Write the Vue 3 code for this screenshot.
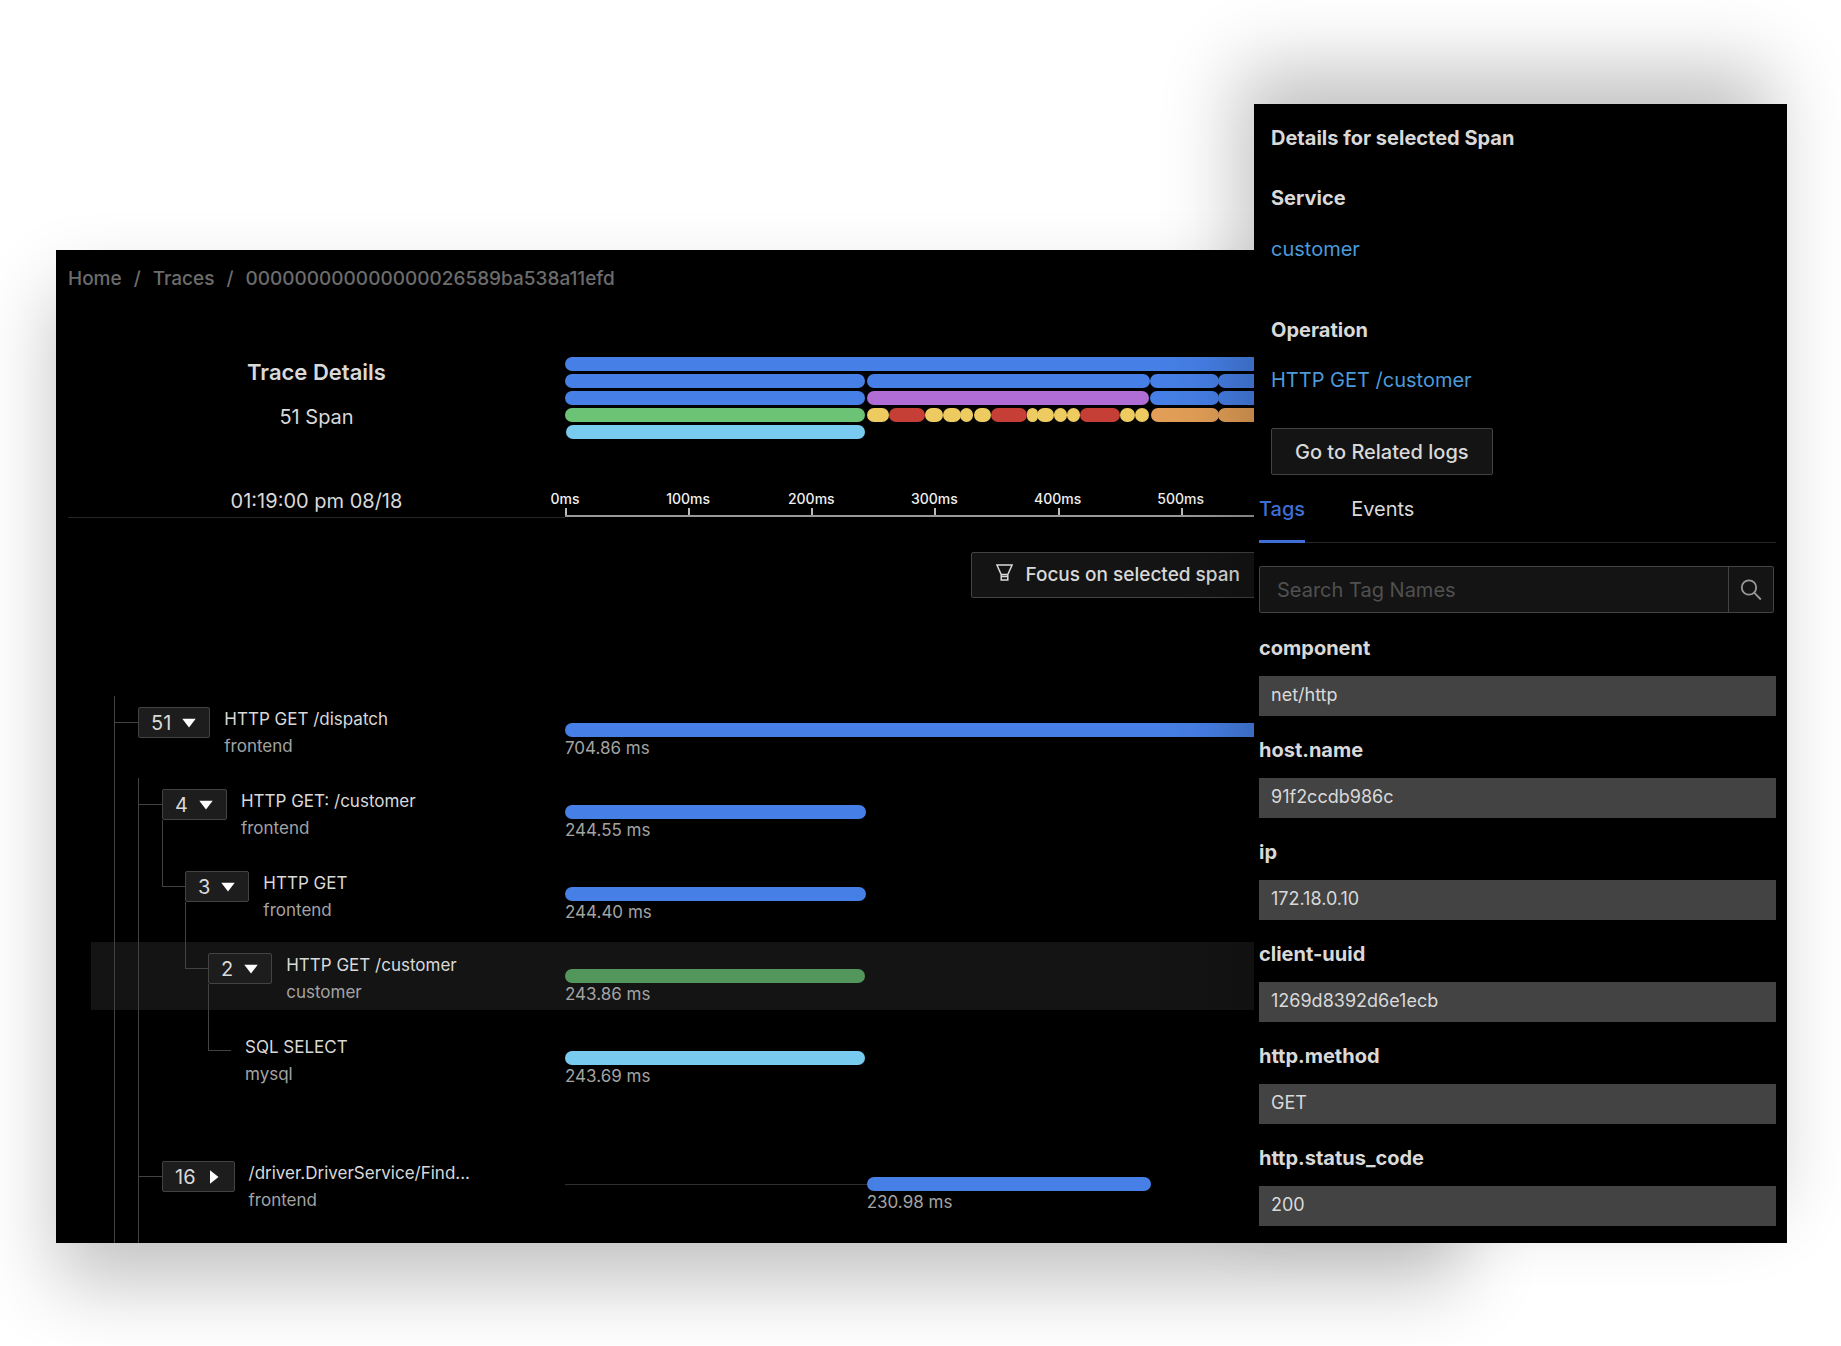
<script setup>
import { ref, computed } from 'vue'

const TRACE_MS = 704.86
const pct = (ms) => `${(ms / TRACE_MS) * 100}%`

const lanes = [
  [[0, 704.86, 'blue']],
  [[0, 244, 'blue'], [245, 475, 'blue'], [475, 531, 'blue'], [530, 704.86, 'blue']],
  [[0, 244, 'blue'], [245, 474, 'purple'], [475, 531, 'blue'], [530, 704.86, 'blue']],
  [
    [0, 244, 'green'], [245, 263, 'yellow'], [263, 292, 'red'], [292, 307, 'yellow'],
    [307, 322, 'yellow'], [321, 331, 'yellow'], [332, 346, 'yellow'], [346, 375, 'red'],
    [375, 384, 'yellow'], [383, 397, 'yellow'], [397, 408, 'yellow'], [408, 418, 'yellow'],
    [418, 451, 'red'], [451, 463, 'yellow'], [463, 474, 'yellow'],
    [476, 531, 'orange'], [530, 704.86, 'orange'],
  ],
  [[1, 244, 'cyan']],
].map((lane) => {
  let end = 0
  return lane.map(([from, to, color]) => {
    const style = { marginLeft: pct(from - end), width: pct(to - from) }
    end = to
    return { color, style }
  })
})

const ticks = [0, 100, 200, 300, 400, 500]

const spans = [
  { rails: ['tee'], count: 51, open: true, name: 'HTTP GET /dispatch', service: 'frontend', start: 0, ms: '704.86', color: 'blue' },
  { rails: ['line', 'tee'], count: 4, open: true, stem: true, name: 'HTTP GET: /customer', service: 'frontend', start: 0, ms: '244.55', color: 'blue' },
  { rails: ['line', 'line', 'elbow'], count: 3, open: true, stem: true, name: 'HTTP GET', service: 'frontend', start: 0, ms: '244.40', color: 'blue' },
  { rails: ['line', 'line', 'none', 'elbow'], count: 2, open: true, stem: true, selected: true, name: 'HTTP GET /customer', service: 'customer', start: 0, ms: '243.86', color: 'leaf' },
  { rails: ['line', 'line', 'none', 'none', 'elbow'], last: true, name: 'SQL SELECT', service: 'mysql', start: 0, ms: '243.69', color: 'cyan' },
  { rails: ['line', 'tee'], count: 16, open: false, name: '/driver.DriverService/Find...', service: 'frontend', start: 245, ms: '230.98', color: 'blue' },
]

const tags = [
  ['component', 'net/http'],
  ['host.name', '91f2ccdb986c'],
  ['ip', '172.18.0.10'],
  ['client-uuid', '1269d8392d6e1ecb'],
  ['http.method', 'GET'],
  ['http.status_code', '200'],
]
const query = ref('')
const shownTags = computed(() => tags.filter(([key]) => key.includes(query.value)))
</script>

<template>
  <div class="stage">
    <main class="trace">
      <nav class="crumbs" aria-label="Breadcrumb">
        <a href="#">Home</a><span>/</span><a href="#">Traces</a><span>/</span>
        <span>000000000000000026589ba538a11efd</span>
      </nav>

      <header class="summary">
        <div class="info">
          <h1>Trace Details</h1>
          <p>51 Span</p>
          <time>01:19:00 pm 08/18</time>
        </div>
        <div class="overview">
          <div v-for="(lane, i) in lanes" :key="i" class="lane">
            <i v-for="(seg, j) in lane" :key="j" :class="['seg', seg.color]" :style="seg.style"></i>
          </div>
          <ol class="axis">
            <li v-for="t in ticks" :key="t" :style="{ width: pct(100) }"><span>{{ t }}ms</span></li>
          </ol>
        </div>
      </header>

      <div class="controls">
        <button type="button" class="btn focus">
          <svg width="17" height="18" viewBox="0 0 17 18" fill="none" stroke="currentColor" stroke-width="1.5" aria-hidden="true">
            <path d="M.9 1h15.2l-4.3 9.5H5.2zM5.2 10v6h6.6v-6M5.2 12.6h6.6" />
          </svg>
          Focus on selected span
        </button>
      </div>

      <ul class="spans">
        <li v-for="s in spans" :key="s.ms" :class="['span-row', { selected: s.selected, last: s.last }]">
          <div class="tree">
            <i v-for="(r, i) in s.rails" :key="i" :class="['rail', r]"></i>
            <div v-if="s.count" :class="['toggle', { stem: s.stem }]">
              <button type="button" :aria-expanded="s.open">
                {{ s.count }}
                <svg width="14" height="14" viewBox="0 0 14 14" fill="#fff" aria-hidden="true">
                  <path v-if="s.open" d="M.3 2.8h13.4L7 11.6z" />
                  <path v-else d="M3 .3v13.4L11.5 7z" />
                </svg>
              </button>
            </div>
            <div class="label">
              <div class="name">{{ s.name }}</div>
              <div class="service">{{ s.service }}</div>
            </div>
          </div>
          <div class="timeline">
            <div class="track">
              <i v-if="s.start" class="lead" :style="{ width: pct(s.start) }"></i>
              <i :class="['seg', s.color]" :style="{ width: pct(s.ms) }"></i>
            </div>
            <div class="duration" :style="{ marginLeft: pct(s.start) }">{{ s.ms }} ms</div>
          </div>
        </li>
      </ul>
    </main>

    <aside class="details">
      <section class="meta">
        <h2>Details for selected Span</h2>
        <h3>Service</h3>
        <a href="#">customer</a>
        <h3 class="operation">Operation</h3>
        <a href="#">HTTP GET /customer</a>
        <button type="button" class="btn logs">Go to Related logs</button>
      </section>

      <div class="tabs" role="tablist">
        <button type="button" role="tab" aria-selected="true">Tags</button>
        <button type="button" role="tab" aria-selected="false">Events</button>
      </div>

      <form class="search" @submit.prevent>
        <input v-model="query" type="text" placeholder="Search Tag Names" aria-label="Search Tag Names" />
        <button type="submit" aria-label="Search">
          <svg width="22" height="22" viewBox="0 0 22 22" fill="none" stroke="currentColor" stroke-width="1.8" aria-hidden="true">
            <circle cx="9" cy="8.5" r="7.2" /><path d="M14.2 13.7l6.6 6.8" />
          </svg>
        </button>
      </form>

      <dl class="tags">
        <template v-for="[key, value] in shownTags" :key="key">
          <dt>{{ key }}</dt>
          <dd>{{ value }}</dd>
        </template>
      </dl>
    </aside>
  </div>
</template>

<style>
body {
  margin: 0;
  background: #fff;
}
</style>

<style scoped>
.stage {
  display: flex;
  align-items: flex-start;
  overflow: hidden;
  padding: 104px 54px 102px 56px;
  font: 400 20px/24px Inter, "Liberation Sans", sans-serif;
  color: #d9d9d9;
}
h1, h2, h3, p, ul, ol, dl, dd { margin: 0; padding: 0; }
ul, ol { list-style: none; }
i { display: block; flex: none; }
button, input { font: inherit; color: inherit; }
a { text-decoration: none; color: inherit; }

.trace {
  flex: 1;
  min-width: 0;
  box-sizing: border-box;
  margin-top: 146px;
  padding: 17px 28px 0 12px;
  background: #000;
  box-shadow: 0 40px 72px rgba(0, 0, 0, 0.24);
}
.crumbs {
  display: flex;
  gap: 12px;
  font-size: 19px;
  font-weight: 500;
  color: #6c6c6c;
}
.summary {
  display: flex;
  margin-top: 66px;
}
.info {
  display: flex;
  flex-direction: column;
  align-items: center;
  flex: 0 0 497px;
  box-sizing: border-box;
  height: 161px;
  border-bottom: 1px solid #262626;
}
h1 {
  font-size: 22px;
  line-height: 30px;
  font-weight: 600;
}
.info p { margin-top: 18px; }
.info time { margin-top: auto; margin-bottom: 4px; }
.overview {
  flex: 1;
  min-width: 0;
}
.lane {
  display: flex;
  height: 14px;
  margin-bottom: 3px;
}
.seg {
  height: 14px;
  border-radius: 7px;
}
.blue { background: #467fe6; }
.green { background: #6dc375; }
.leaf { background: #53965b; }
.cyan { background: #78cbee; }
.purple { background: #b06dd5; }
.yellow { background: #edcb60; }
.red { background: #c63f36; }
.orange { background: #e39f57; }
.axis {
  display: flex;
  margin-top: 52px;
  border-bottom: 2px solid #999;
  font-size: 14px;
  line-height: 16px;
  font-weight: 500;
  color: #f0f0f0;
}
.axis li {
  flex: none;
  padding-bottom: 8px;
  background: linear-gradient(#bbb, #bbb) 0 100% / 2px 7px no-repeat;
}
.axis span {
  display: inline-block;
  transform: translateX(-50%);
}

.btn {
  display: flex;
  align-items: center;
  background: #141414;
  border: 1px solid #434343;
  border-radius: 2px;
}
.controls {
  display: flex;
  justify-content: flex-end;
  margin-top: 34px;
  padding-right: 170px;
}
.focus {
  height: 46px;
  gap: 12px;
  padding: 0 22px 0 24px;
  font-size: 19px;
  font-weight: 500;
}
.focus svg { margin-bottom: 4px; }
.spans {
  margin: 98px 0 0 23px;
}
.span-row {
  display: flex;
  height: 82px;
}
.span-row.selected {
  background: linear-gradient(#141414, #141414) 0 0 / 100% 68px no-repeat;
}
.span-row.last { height: 126px; }
.span-row:last-child { height: 93px; }
.tree {
  display: flex;
  flex: 0 0 451px;
  min-width: 0;
  padding-left: 23px;
}
.rail {
  width: 24px;
  box-sizing: border-box;
}
.rail.line, .rail.tee { border-left: 1px solid #434343; }
.rail.tee::before, .rail.elbow::before {
  content: "";
  display: block;
  height: 26px;
  border-bottom: 1px solid #434343;
}
.rail.elbow::before { border-left: 1px solid #434343; }
.rail:nth-child(n + 3) { width: 23px; }
.toggle {
  display: flex;
  flex-direction: column;
  padding-top: 11px;
}
.toggle.stem::after {
  content: "";
  flex: 1;
  border-left: 1px solid #434343;
}
.toggle button {
  display: flex;
  align-items: center;
  gap: 11px;
  height: 31px;
  padding: 0 13px 0 12px;
  background: #1d1d1d;
  border: 1px solid #434343;
  border-radius: 2px;
}
.label {
  padding: 11px 0 0 14px;
  font-size: 17px;
  white-space: nowrap;
}
.service {
  margin-top: 3px;
  color: #a3a3a3;
}
.timeline {
  flex: 1;
  min-width: 0;
  padding-top: 27px;
}
.track {
  display: flex;
  align-items: center;
}
.lead {
  height: 1px;
  background: #303030;
}
.duration {
  font-size: 17px;
  line-height: 22px;
  color: #a3a3a3;
}

.details {
  position: relative;
  flex: 0 0 533px;
  box-sizing: border-box;
  margin-left: -207px;
  padding: 22px 11px 17px 5px;
  background: #000;
  box-shadow: -16px -36px 72px rgba(0, 0, 0, 0.24);
}
.meta {
  display: flex;
  flex-direction: column;
  align-items: flex-start;
  padding-left: 12px;
}
h2, h3, dt {
  font-size: 20px;
  font-weight: 700;
}
.meta h3 { margin: 36px 0 27px; }
.meta .operation { margin: 57px 0 26px; }
.meta a { color: #4c9ad8; }
.logs {
  height: 47px;
  margin-top: 36px;
  padding: 0 23px;
  font-weight: 500;
}
.tabs {
  display: flex;
  gap: 46px;
  margin-top: 22px;
  border-bottom: 1px solid #262626;
}
.tabs button {
  padding: 0 0 19px;
  margin-bottom: -1px;
  background: none;
  border: 0;
  border-bottom: 3px solid transparent;
}
.tabs [aria-selected="true"] {
  color: #3f6fd6;
  border-color: #3f6fd6;
  font-weight: 500;
}
.search {
  display: flex;
  height: 45px;
  margin: 23px 2px 0 0;
  background: #141414;
  border: 1px solid #434343;
  border-radius: 2px;
}
.search input {
  flex: 1;
  min-width: 0;
  padding: 0 17px;
  background: none;
  border: 0;
}
.search input::placeholder { color: #505050; opacity: 1; }
.search button {
  display: flex;
  align-items: center;
  padding: 0 11px;
  background: none;
  border: 0;
  border-left: 1px solid #434343;
  color: #999;
}
.tags { padding-top: 1px; }
dt { padding: 22px 0 16px; }
dd {
  padding: 7px 12px 9px;
  background: #434343;
  font-size: 18px;
}
</style>
